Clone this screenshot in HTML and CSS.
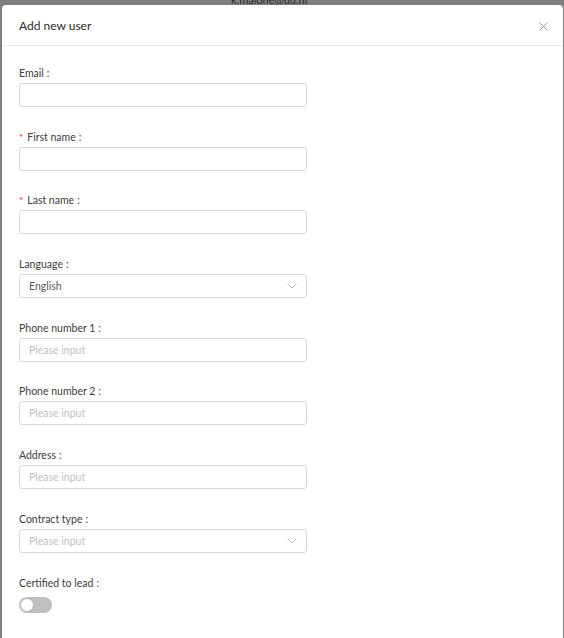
FILE: index.html
```html
<!DOCTYPE html>
<html>
<head>
<meta charset="utf-8">
<link rel="stylesheet" href="styles.css">
</head>
<body>
<div class="behind">k.malone@uu.nl</div>
<div class="modal">
  <div class="modal-header">
    <span class="modal-title">Add new user</span>
    <svg class="close" width="9" height="9" viewBox="0 0 9 9"><path d="M0.5 0.5L8.5 8.5M8.5 0.5L0.5 8.5" stroke="#999" stroke-width="1" fill="none"/></svg>
  </div>
  <div class="modal-body">
    <div class="field">
      <div class="label">Email<span class="colon">:</span></div>
      <div class="input"></div>
    </div>
    <div class="field">
      <div class="label"><span class="req">*</span>First name<span class="colon">:</span></div>
      <div class="input"></div>
    </div>
    <div class="field">
      <div class="label"><span class="req">*</span>Last name<span class="colon">:</span></div>
      <div class="input"></div>
    </div>
    <div class="field">
      <div class="label">Language<span class="colon">:</span></div>
      <div class="input select"><span class="value">English</span><svg class="chev" width="10" height="6" viewBox="0 0 10 6"><path d="M0.5 0.5L5 5L9.5 0.5" stroke="#bfbfbf" stroke-width="1" fill="none"/></svg></div>
    </div>
    <div class="field">
      <div class="label">Phone number 1<span class="colon">:</span></div>
      <div class="input"><span class="ph">Please input</span></div>
    </div>
    <div class="field">
      <div class="label">Phone number 2<span class="colon">:</span></div>
      <div class="input"><span class="ph">Please input</span></div>
    </div>
    <div class="field">
      <div class="label">Address<span class="colon">:</span></div>
      <div class="input"><span class="ph">Please input</span></div>
    </div>
    <div class="field">
      <div class="label">Contract type<span class="colon">:</span></div>
      <div class="input select"><span class="ph">Please input</span><svg class="chev" width="10" height="6" viewBox="0 0 10 6"><path d="M0.5 0.5L5 5L9.5 0.5" stroke="#bfbfbf" stroke-width="1" fill="none"/></svg></div>
    </div>
    <div class="field">
      <div class="label">Certified to lead<span class="colon">:</span></div>
      <div class="switch"><span class="knob"></span></div>
    </div>
  </div>
</div>
</body>
</html>
```

FILE: styles.css
```css
html, body {
  margin: 0;
  padding: 0;
  height: 638px;
  overflow: hidden;
}
body {
  background: #7f7f7f;
  font-family: Lato, "Open Sans", sans-serif;
  position: relative;
}
.behind {
  position: absolute;
  left: 231px;
  top: -7px;
  font-size: 11px;
  color: #2a2a2a;
}
.modal {
  position: absolute;
  left: 2px;
  top: 5px;
  right: 1px;
  bottom: 0;
  background: #fff;
  border-radius: 4px 4px 0 0;
}
.modal-header {
  height: 41px;
  box-sizing: border-box;
  border-bottom: 1px solid #e8e8e8;
  display: flex;
  align-items: center;
  justify-content: space-between;
  padding: 0 17px;
}
.modal-title {
  font-size: 12px;
  color: #2b2b2b;
  margin-top: 1px;
}
.close {
  margin-right: -2px;
  margin-top: 2px;
}
.modal-body {
  padding: 19px 17px 0;
}
.field {
  margin-bottom: 21.7px;
}
.label {
  font-size: 10.5px;
  line-height: 16px;
  color: #3d3d3d;
  margin-bottom: 2px;
}
.colon {
  margin-left: 3px;
}
.req {
  color: #f5222d;
  margin-right: 4px;
  font-size: 10px;
}
.input {
  box-sizing: border-box;
  width: 288px;
  height: 24px;
  border: 1px solid #d9d9d9;
  border-radius: 3px;
  display: flex;
  align-items: center;
  padding: 0 9px;
  font-size: 10.5px;
}
.value {
  color: #595959;
}
.ph {
  color: #bfbfbf;
}
.select {
  justify-content: space-between;
}
.switch {
  width: 33px;
  height: 16px;
  border-radius: 8px;
  background: #bfbfbf;
  position: relative;
  margin-top: 6px;
}
.knob {
  position: absolute;
  left: 2px;
  top: 2px;
  width: 12px;
  height: 12px;
  border-radius: 50%;
  background: #fff;
}
```
